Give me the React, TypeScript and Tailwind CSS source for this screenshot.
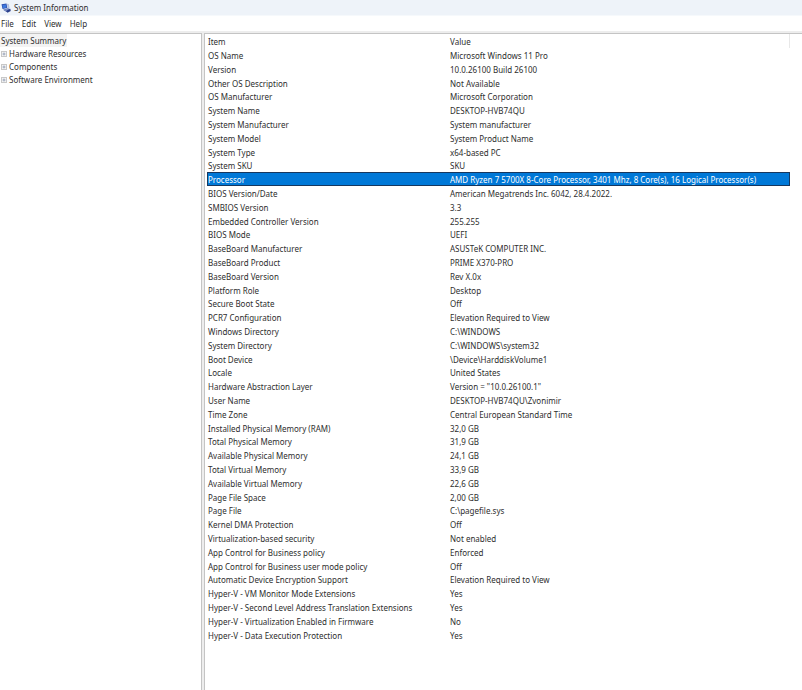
import { useState } from "react";
import { clsx } from "clsx";

const menus = ["File", "Edit", "View", "Help"];

const categories = ["Hardware Resources", "Components", "Software Environment"];

const summary: [string, string][] = [
  ["OS Name", "Microsoft Windows 11 Pro"],
  ["Version", "10.0.26100 Build 26100"],
  ["Other OS Description", "Not Available"],
  ["OS Manufacturer", "Microsoft Corporation"],
  ["System Name", "DESKTOP-HVB74QU"],
  ["System Manufacturer", "System manufacturer"],
  ["System Model", "System Product Name"],
  ["System Type", "x64-based PC"],
  ["System SKU", "SKU"],
  ["Processor", "AMD Ryzen 7 5700X 8-Core Processor, 3401 Mhz, 8 Core(s), 16 Logical Processor(s)"],
  ["BIOS Version/Date", "American Megatrends Inc. 6042, 28.4.2022."],
  ["SMBIOS Version", "3.3"],
  ["Embedded Controller Version", "255.255"],
  ["BIOS Mode", "UEFI"],
  ["BaseBoard Manufacturer", "ASUSTeK COMPUTER INC."],
  ["BaseBoard Product", "PRIME X370-PRO"],
  ["BaseBoard Version", "Rev X.0x"],
  ["Platform Role", "Desktop"],
  ["Secure Boot State", "Off"],
  ["PCR7 Configuration", "Elevation Required to View"],
  ["Windows Directory", "C:\\WINDOWS"],
  ["System Directory", "C:\\WINDOWS\\system32"],
  ["Boot Device", "\\Device\\HarddiskVolume1"],
  ["Locale", "United States"],
  ["Hardware Abstraction Layer", 'Version = "10.0.26100.1"'],
  ["User Name", "DESKTOP-HVB74QU\\Zvonimir"],
  ["Time Zone", "Central European Standard Time"],
  ["Installed Physical Memory (RAM)", "32,0 GB"],
  ["Total Physical Memory", "31,9 GB"],
  ["Available Physical Memory", "24,1 GB"],
  ["Total Virtual Memory", "33,9 GB"],
  ["Available Virtual Memory", "22,6 GB"],
  ["Page File Space", "2,00 GB"],
  ["Page File", "C:\\pagefile.sys"],
  ["Kernel DMA Protection", "Off"],
  ["Virtualization-based security", "Not enabled"],
  ["App Control for Business policy", "Enforced"],
  ["App Control for Business user mode policy", "Off"],
  ["Automatic Device Encryption Support", "Elevation Required to View"],
  ["Hyper-V - VM Monitor Mode Extensions", "Yes"],
  ["Hyper-V - Second Level Address Translation Extensions", "Yes"],
  ["Hyper-V - Virtualization Enabled in Firmware", "No"],
  ["Hyper-V - Data Execution Protection", "Yes"],
];

function AppIcon() {
  return (
    <svg viewBox="0 0 20 20" className="size-[10px] shrink-0" aria-hidden="true">
      <path d="M1 2.5 11 1l1.5 9L3 12z" fill="#2c4fae" />
      <path d="m3 4 7-1 1 6-7 1.5z" fill="#3d78dd" />
      <path d="m12 1.5 3.5.5 2 9.5-4 .5z" fill="#b3c0de" />
      <path d="m4 13.5 9-3 6 2.5-8 5z" fill="#5a70b0" />
      <path d="m6 14 6-2 3.5 1.5-5 2.5z" fill="#8496c8" />
      <path d="m10 16 8.5-4.5 1 4.5-6.5 3.5z" fill="#2a3f8c" />
    </svg>
  );
}

function ExpandIcon() {
  return (
    <svg viewBox="0 0 6 6" className="size-[6px] shrink-0" aria-hidden="true">
      <rect x=".5" y=".5" width="5" height="5" fill="#f4f4f4" stroke="#c8c8c8" />
      <path d="M1.5 3h3M3 1.5v3" stroke="#8c98b0" strokeWidth=".8" />
    </svg>
  );
}

export default function App() {
  const [selected, setSelected] = useState("Processor");

  return (
    <div className="flex min-h-screen flex-col bg-white font-['Noto_Sans','Open_Sans',sans-serif] text-[8px] leading-[12px] text-[#2e2e2e]">
      <header className="flex h-[15px] items-center gap-[3px] bg-[#eef3f9] pl-px">
        <AppIcon />
        <h1>System Information</h1>
      </header>
      <nav className="flex h-[16px] items-center gap-[8px] border-t border-[#f6f9fc] pl-px">
        {menus.map((menu) => (
          <button key={menu} type="button">
            {menu}
          </button>
        ))}
      </nav>
      <div className="flex flex-1 border-t-2 border-[#ededed]">
        <aside className="w-[202px] shrink-0 border-t border-r border-[#c4c4c4]">
          <button type="button" className="block h-[13px] bg-[#f3f3f3] px-px">
            System Summary
          </button>
          <ul>
            {categories.map((category) => (
              <li key={category}>
                <button type="button" className="flex h-[13px] items-center gap-[2px] pl-px">
                  <ExpandIcon />
                  {category}
                </button>
              </li>
            ))}
          </ul>
        </aside>
        <div className="w-[2px] shrink-0 bg-[#ededed]" />
        <main className="min-w-0 flex-1 border-t border-l border-[#c4c4c4] pr-[12px] pl-[2px]">
          <table className="w-full table-fixed border-collapse text-left leading-[10px] whitespace-nowrap">
            <thead>
              <tr className="h-[14px] align-top">
                <th className="w-[243px] p-0 pt-[3px] pl-px font-normal">Item</th>
                <th className="border-r border-[#e8e8e8] p-0 pt-[3px] font-normal">Value</th>
              </tr>
            </thead>
            <tbody>
              {summary.map(([item, value]) => (
                <tr
                  key={item}
                  onClick={() => setSelected(item)}
                  className={clsx(
                    "h-[14px] align-top nth-[5n+3]:h-[13px]",
                    selected === item && "bg-[#0078d7] text-white outline outline-[#17375e] -outline-offset-1",
                  )}
                >
                  <td className="p-0 pt-[3px] pl-px">{item}</td>
                  <td className="p-0 pt-[3px]">{value}</td>
                </tr>
              ))}
            </tbody>
          </table>
        </main>
      </div>
    </div>
  );
}
